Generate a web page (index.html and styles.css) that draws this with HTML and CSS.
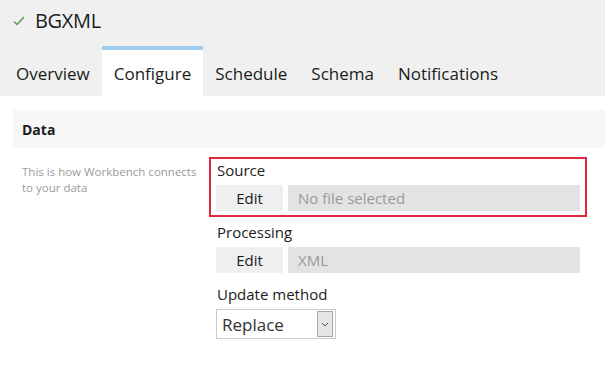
FILE: index.html
```html
<!DOCTYPE html>
<html lang="en">
<head>
    <meta charset="UTF-8">
    <title>BGXML - Configure</title>
    <link rel="stylesheet" href="styles.css">
</head>
<body>

    <div class="header">
        <div class="title-row">
            <svg class="check" width="12" height="10" viewBox="0 0 12 10">
                <path d="M1 5.5 L4 8.5 L11 1" fill="none" stroke="#4f9d4f" stroke-width="1.4"/>
            </svg>
            <span class="title">BGXML</span>
        </div>

        <!-- Tabs -->
        <div class="tabs">
            <div class="tab">Overview</div>
            <div class="tab active">Configure</div>
            <div class="tab">Schedule</div>
            <div class="tab">Schema</div>
            <div class="tab">Notifications</div>
        </div>
    </div>

    <div class="content">
        <div class="section-head">Data</div>

        <div class="section-body">
            <div class="description">This is how Workbench connects to your data</div>

            <div class="fields">
                <div class="field highlighted">
                    <div class="label">Source</div>
                    <div class="field-row">
                        <button class="edit-btn">Edit</button>
                        <div class="value">No file selected</div>
                    </div>
                </div>

                <div class="field">
                    <div class="label">Processing</div>
                    <div class="field-row">
                        <button class="edit-btn">Edit</button>
                        <div class="value">XML</div>
                    </div>
                </div>

                <div class="field">
                    <div class="label">Update method</div>
                    <div class="select">
                        <span>Replace</span>
                        <span class="select-arrow">
                            <svg width="8" height="5" viewBox="0 0 8 5">
                                <path d="M1 1 L4 4 L7 1" fill="none" stroke="#555" stroke-width="1"/>
                            </svg>
                        </span>
                    </div>
                </div>
            </div>
        </div>
    </div>

</body>
</html>
```

FILE: styles.css
```css
body {
    margin: 0;
    font-family: "Open Sans", "Noto Sans", sans-serif;
    color: #1b1b1b;
    background-color: #ffffff;
}
.header {
    background-color: #f0f0f0;
}
.title-row {
    height: 46px;
    display: flex;
    align-items: center;
    padding-left: 13px;
}
.check {
    margin-right: 10px;
    margin-top: -5px;
}
.title {
    font-size: 20px;
    margin-top: -5px;
    letter-spacing: -0.3px;
}
.tabs {
    display: flex;
    padding-left: 4px;
}
.tab {
    height: 46px;
    padding: 0 12px;
    font-size: 17px;
    line-height: 48px;
    border-top: 4px solid transparent;
}
.tab.active {
    background: white;
    border-top-color: #9fcdf0;
}
.content {
    padding: 14px 0 20px 13px;
}
.section-head {
    height: 38px;
    line-height: 40px;
    padding-left: 9px;
    background: #f7f7f7;
    font-size: 14px;
    font-weight: bold;
}
.section-body {
    display: flex;
    padding-top: 9px;
}
.description {
    width: 178px;
    padding-left: 9px;
    font-size: 11.5px;
    line-height: 16px;
    color: #9a9a9a;
    margin-top: 7px;
}
.fields {
    display: flex;
    flex-direction: column;
    gap: 2px;
    margin-left: 9px;
}
.field {
    width: 364px;
    border: 2px solid transparent;
    padding: 1px 5px 4px;
}
.field.highlighted {
    border-color: #e0283c;
}
.label {
    font-size: 15px;
    line-height: 20px;
    margin-bottom: 5px;
    padding-left: 1px;
}
.field-row {
    display: flex;
    gap: 5px;
    height: 26px;
}
.edit-btn {
    width: 67px;
    border: none;
    background: #efefef;
    font-family: inherit;
    font-size: 15px;
    color: #1b1b1b;
    padding: 0;
}
.value {
    flex: 1;
    background: #e3e3e3;
    color: #9a9a9a;
    font-size: 15px;
    line-height: 26px;
    padding-left: 10px;
}
.select {
    box-sizing: border-box;
    width: 120px;
    height: 30px;
    border: 1px solid #cccccc;
    display: flex;
    align-items: center;
    justify-content: space-between;
    padding-left: 5px;
    font-size: 17px;
    color: #333;
}
.select-arrow {
    width: 14px;
    height: 24px;
    margin-right: 2px;
    border: 1px solid #a8a8a8;
    background: #e6e6e6;
    display: flex;
    align-items: center;
    justify-content: center;
}
```
